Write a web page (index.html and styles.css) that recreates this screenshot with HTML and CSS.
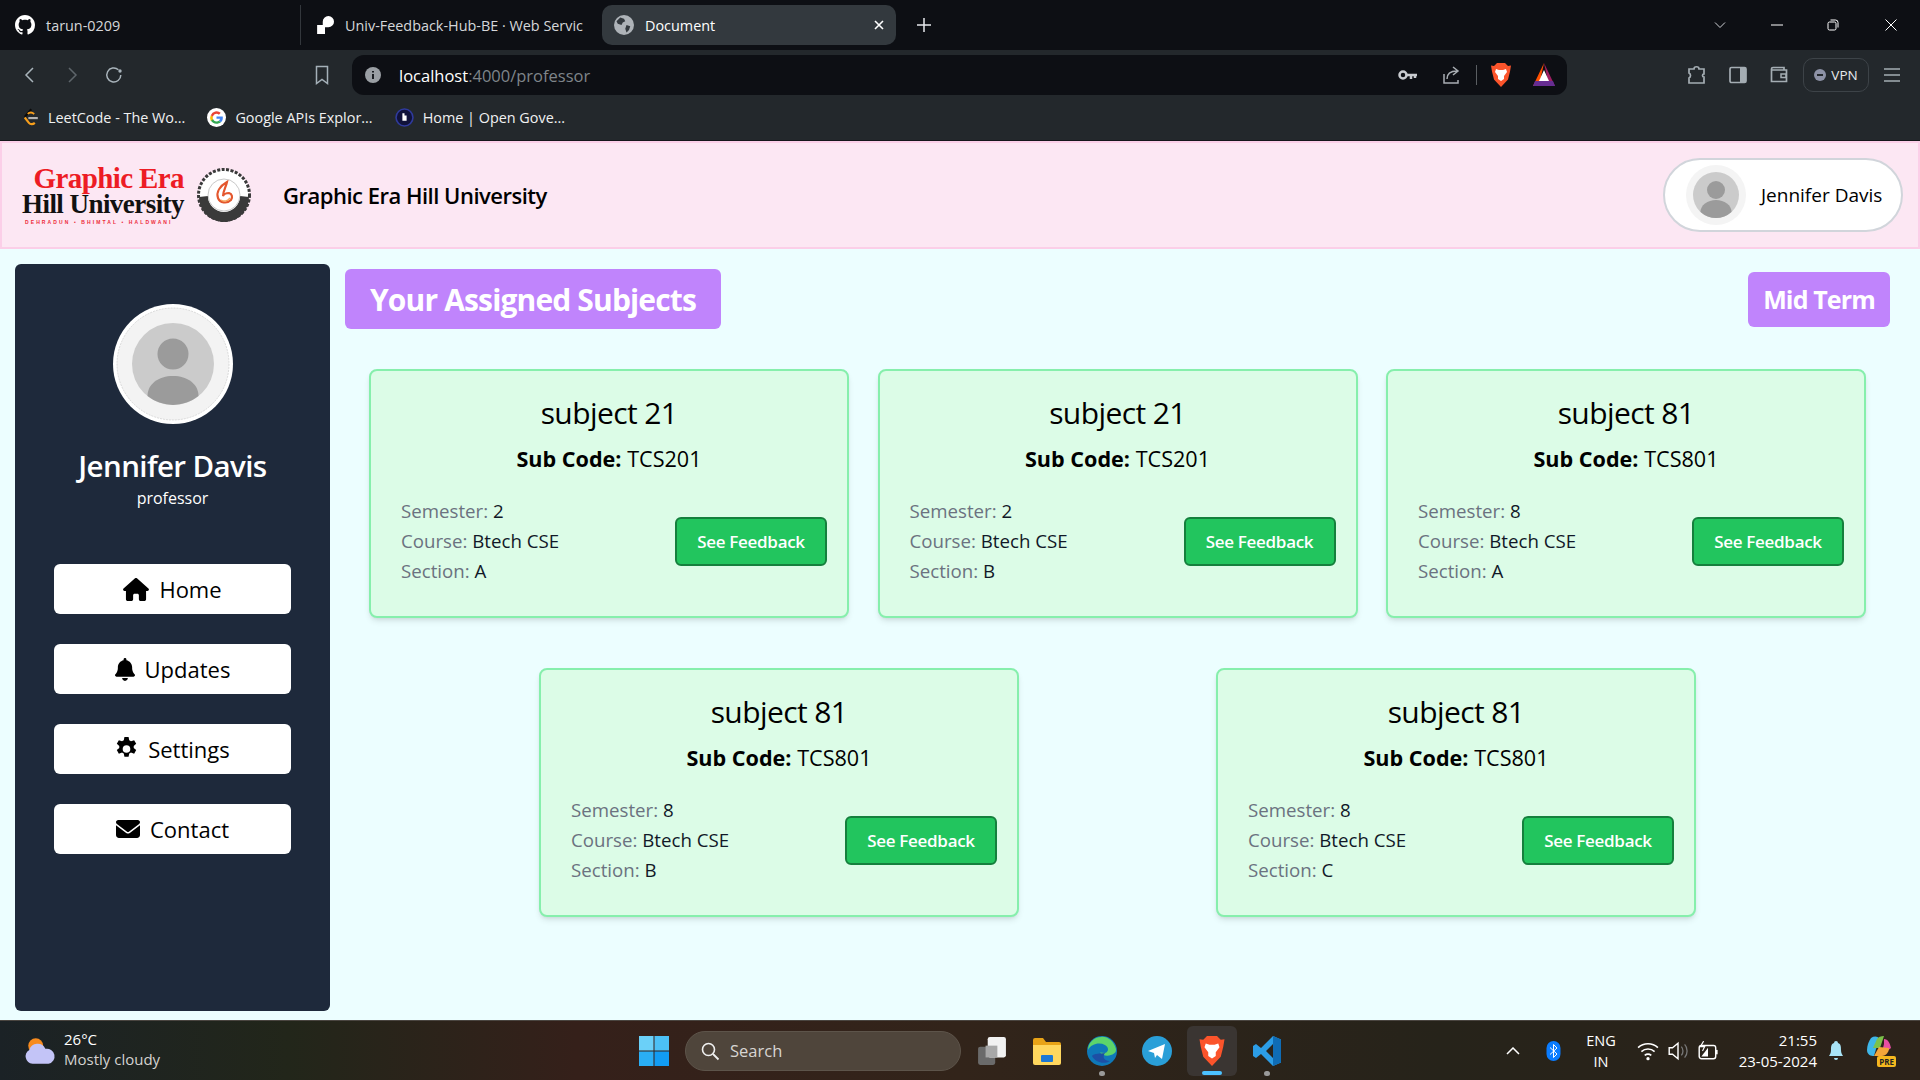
FILE: index.html
```html
<!DOCTYPE html>
<html lang="en">
<head>
<meta charset="UTF-8">
<meta name="viewport" content="width=device-width, initial-scale=1.0">
<title>Document</title>
<link rel="stylesheet" href="styles.css">
</head>
<body>

<!-- browser tabs -->
<div class="tabstrip">
  <div class="tab tab-first">
    <svg class="tab-icon" viewBox="0 0 16 16"><path fill="#fff" d="M8 0C3.58 0 0 3.58 0 8c0 3.54 2.29 6.53 5.47 7.59.4.07.55-.17.55-.38 0-.19-.01-.82-.01-1.49-2.01.37-2.53-.49-2.69-.94-.09-.23-.48-.94-.82-1.13-.28-.15-.68-.52-.01-.53.63-.01 1.08.58 1.23.82.72 1.21 1.87.87 2.33.66.07-.52.28-.87.51-1.07-1.78-.2-3.64-.89-3.64-3.95 0-.87.31-1.59.82-2.15-.08-.2-.36-1.02.08-2.12 0 0 .67-.21 2.2.82.64-.18 1.32-.27 2-.27s1.36.09 2 .27c1.53-1.04 2.2-.82 2.2-.82.44 1.1.16 1.92.08 2.12.51.56.82 1.27.82 2.15 0 3.07-1.87 3.75-3.65 3.95.29.25.54.73.54 1.48 0 1.07-.01 1.93-.01 2.2 0 .21.15.46.55.38A8.01 8.01 0 0 0 16 8c0-4.42-3.58-8-8-8z"/></svg>
    <span>tarun-0209</span>
  </div>
  <div class="tab tab-second">
    <svg class="tab-icon" viewBox="0 0 16 16"><path fill="#fff" d="M1 16V8h5V5a5 5 0 1 1 5 5H8v6z"/></svg>
    <span class="tab-clip">Univ-Feedback-Hub-BE · Web Servic</span>
  </div>
  <div class="tab tab-active">
    <svg class="tab-icon" viewBox="0 0 16 16"><circle cx="8" cy="8" r="8" fill="#aeb3b8"/><path fill="#33393e" d="M5 2l3 1 1 2-2 1-1 2-3-1-1-2zM10 8l3 1-1 3-2 2-1-3z"/></svg>
    <span class="tab-title">Document</span>
    <svg class="tab-close" viewBox="0 0 10 10"><path d="M1 1l8 8M9 1l-8 8" stroke="#fff" stroke-width="1.6"/></svg>
  </div>
  <svg class="new-tab" viewBox="0 0 16 16"><path d="M8 1v14M1 8h14" stroke="#e8eaed" stroke-width="1.5"/></svg>
  <div class="window-controls">
    <svg viewBox="0 0 12 12" class="win-ctl win-down"><path d="M1 3.500l5 5 5-5" fill="none" stroke="#cfd2d6"/></svg>
    <svg viewBox="0 0 12 12" class="win-ctl win-min"><path d="M0 6h12" stroke="#fff"/></svg>
    <svg viewBox="0 0 12 12" class="win-ctl win-max"><rect x="1" y="3" width="8" height="8" rx="1.500" fill="none" stroke="#fff"/><path d="M3.500 1h5a2.500 2.500 0 0 1 2.500 2.500v5" fill="none" stroke="#fff"/></svg>
    <svg viewBox="0 0 12 12" class="win-ctl win-close"><path d="M.5.500l11 11M11.500.500l-11 11" stroke="#fff"/></svg>
  </div>
</div>

<!-- address bar -->
<div class="toolbar">
  <div class="nav-icons">
    <svg class="tool-icon" viewBox="0 0 20 20"><path d="M13 3l-7 7 7 7" fill="none" stroke="#a9b4bb" stroke-width="1.500"/></svg>
    <svg class="tool-icon" viewBox="0 0 20 20"><path d="M7 3l7 7-7 7" fill="none" stroke="#5e656b" stroke-width="1.500"/></svg>
    <svg class="tool-icon" viewBox="0 0 20 20"><path d="M16.800 10a7 7 0 1 1-2.400-5.300" fill="none" stroke="#a9b4bb" stroke-width="1.500"/><circle cx="16" cy="6" r="1.700" fill="#a9b4bb"/></svg>
  </div>
  <svg class="bookmark-icon" viewBox="0 0 16 20"><path d="M2.500 1.500h11v17l-5.500-4-5.500 4z" fill="none" stroke="#a4b0b8" stroke-width="1.500"/></svg>
  <div class="urlbar">
    <svg class="info-icon" viewBox="0 0 16 16"><circle cx="8" cy="8" r="8" fill="#9a9fa4"/><path d="M8 7v5M8 4v1.500" stroke="#0d1014" stroke-width="1.800"/></svg>
    <span class="url-host">localhost</span><span class="url-rest">:4000/professor</span>
    <div class="url-right">
      <svg class="key-icon" viewBox="0 0 20 12"><circle cx="5" cy="6" r="3.500" fill="none" stroke="#c9ccd0" stroke-width="2.500"/><path d="M8 6h11M13 6v4M17 6v3" stroke="#c9ccd0" stroke-width="2.500"/></svg>
      <svg class="share-icon" viewBox="0 0 20 20"><path d="M2 9v9h14v-3M5 14c0-6 4-8 10-8M11 2l5 4-5 4" fill="none" stroke="#a8adb2" stroke-width="1.500"/></svg>
      <div class="url-sep"></div>
      <svg class="brave-icon" viewBox="0 0 20 24"><path fill="#fb542b" d="M3 3l3-3h8l3 3 3-.500-1 6-2 8-7 7.500-7-7.500-2-8-1-6z"/><path fill="#fff" d="M5 6l3 1h4l3-1 1 3-3 4v3l-3 2-3-2v-3l-3-4z"/></svg>
      <svg class="bat-icon" viewBox="0 0 22 24"><path fill="#ff5000" d="M11 0L0 23h6z"/><path fill="#9e1f63" d="M11 0l11 23h-6z"/><path fill="#662d91" d="M2 18h18l2 5H0z"/><path fill="#fff" d="M11 7l5 11H6z"/></svg>
    </div>
  </div>
  <div class="tool-right">
    <svg class="ext-icon" viewBox="0 0 20 20"><path d="M2 4h5c0-3 5-3 5 0h5v5c-2 0-2 3 0 3v6H2v-5c2-1 2-4 0-5z" fill="none" stroke="#a4adb3" stroke-width="1.700"/></svg>
    <svg class="ext-icon" viewBox="0 0 20 20"><rect x="2" y="2.500" width="16" height="15" rx="1.500" fill="none" stroke="#a4adb3" stroke-width="1.700"/><rect x="12" y="3" width="6" height="14" fill="#a4adb3"/></svg>
    <svg class="ext-icon" viewBox="0 0 20 20"><path d="M15 5V2.500H4a1.500 1.500 0 0 0-1.500 1.500v12.500H17.500V5H3" fill="none" stroke="#a4adb3" stroke-width="1.700"/><rect x="12" y="9" width="5" height="3.500" fill="none" stroke="#a4adb3" stroke-width="1.500"/></svg>
    <div class="vpn-pill">
      <span class="vpn-dot"></span>
      <span>VPN</span>
    </div>
    <svg class="ext-icon" viewBox="0 0 20 20"><path d="M2 4h16M2 10h16M2 16h16" stroke="#a4adb3" stroke-width="1.700"/></svg>
  </div>
</div>

<!-- bookmarks -->
<div class="bookmarks">
  <div class="bookmark">
    <svg class="bm-icon" viewBox="0 0 16 16"><path d="M9.500 1L4 7.500" fill="none" stroke="#0a0a0a" stroke-width="1.800"/><path d="M4 8l3.500 4.500c1.200 1.500 3.300 1.500 5 0" fill="none" stroke="#f89f1b" stroke-width="1.800"/><path d="M6.500 5c1.500-1.500 3.500-1.500 5.500 0" fill="none" stroke="#f89f1b" stroke-width="1.500"/><path d="M7 8.500h8" stroke="#b3b3b3" stroke-width="1.800"/></svg>
    <span>LeetCode - The Wo...</span>
  </div>
  <div class="bookmark">
    <svg class="bm-icon" viewBox="0 0 18 18"><circle cx="9" cy="9" r="9" fill="#fff"/><path fill="#4285f4" d="M15 9.200c0-.4 0-.8-.1-1.200H9v2.300h3.400c-.1.700-.6 1.400-1.200 1.800l1.900 1.500c1.200-1 1.900-2.600 1.900-4.400z"/><path fill="#34a853" d="M9 15c1.600 0 3-.5 4.100-1.400l-1.900-1.500c-.6.400-1.300.6-2.200.6-1.600 0-2.900-1-3.400-2.500l-2 1.500C4.600 13.700 6.700 15 9 15z"/><path fill="#fbbc05" d="M5.600 10.700a3.700 3.700 0 0 1 0-2.400l-2-1.500a6 6 0 0 0 0 5.400z"/><path fill="#ea4335" d="M9 5.400c.9 0 1.700.3 2.300.9l1.700-1.700A6 6 0 0 0 3.600 6.800l2 1.500C6.100 6.400 7.400 5.400 9 5.400z"/></svg>
    <span>Google APIs Explor...</span>
  </div>
  <div class="bookmark">
    <svg class="bm-icon" viewBox="0 0 18 18"><circle cx="9" cy="9" r="8" fill="#10123a" stroke="#2f3a9c" stroke-width="1.500"/><path fill="#fff" d="M7 5h2v2h2v5H7z"/></svg>
    <span>Home | Open Gove...</span>
  </div>
</div>

<!-- app -->
<header class="site-header">
  <div class="logo">
    <div class="logo-text">
      <div class="logo-line1">Graphic Era</div>
      <div class="logo-line2">Hill University</div>
      <div class="logo-line3">DEHRADUN • BHIMTAL • HALDWANI</div>
    </div>
    <svg class="logo-seal" viewBox="0 0 56 56">
      <circle cx="28" cy="28" r="25.500" fill="#fff" stroke="#3a3a3a" stroke-width="3" stroke-dasharray="3 1.500"/>
      <path d="M3 30a25 25 0 0 0 50 0l-9-1a16 16 0 0 1-32 0z" fill="#3a3a3a"/>
      <circle cx="28" cy="28" r="16" fill="#fff" stroke="#c9c9c9"/>
      <path d="M31 15c-7 4-11 10-9 16 2 5 9 6 13 2 2-3 1-6-2-7-3 0-5 1-6 3 0-5 3-9 4-14z" fill="none" stroke="#e4572e" stroke-width="2.200"/>
      <path d="M25 33c3 2 7 1 9-2" fill="none" stroke="#f7a35c" stroke-width="1.500"/>
    </svg>
  </div>
  <div class="site-name">Graphic Era Hill University</div>
  <div class="user-pill">
    <div class="pill-avatar">
      <svg viewBox="0 0 60 60"><circle cx="30" cy="30" r="30" fill="#f4f4f4"/><circle cx="30" cy="30" r="23" fill="#cbcbcb"/><circle cx="30" cy="25" r="9" fill="#9b9b9b"/><path d="M14.500 47a15.500 12 0 0 1 31 0 23 23 0 0 1-31 0z" fill="#9b9b9b"/></svg>
    </div>
    <span>Jennifer Davis</span>
  </div>
</header>

<div class="page">
  <aside class="sidebar">
    <div class="profile-photo">
      <svg viewBox="0 0 120 120"><circle cx="60" cy="60" r="60" fill="#fff"/><circle cx="60" cy="60" r="56" fill="#f3f3f3" stroke="#c4c4c4" stroke-width=".6" stroke-dasharray="2 1"/><circle cx="60" cy="60" r="41" fill="#cbcbcb"/><circle cx="60" cy="50" r="15.500" fill="#9b9b9b"/><path d="M34.500 92c0-12 11-20 25.500-20s25.500 8 25.500 20a41 41 0 0 1-51 0z" fill="#9b9b9b"/></svg>
    </div>
    <div class="profile-name">Jennifer Davis</div>
    <div class="profile-role">professor</div>
    <nav class="side-nav">
      <a class="nav-btn">
        <svg class="nav-home" viewBox="0 0 576 512"><path d="M575.800 255.500c0 18-15 32.100-32 32.100h-32l.7 160.200c0 2.700-.2 5.400-.5 8.100V472c0 22.100-17.900 40-40 40H456c-1.100 0-2.200 0-3.300-.1-1.400.1-2.800.1-4.200.1H392c-22.100 0-40-17.900-40-40v-88c0-17.700-14.300-32-32-32h-64c-17.700 0-32 14.300-32 32v88c0 22.100-17.900 40-40 40h-55.900c-1.500 0-3-.1-4.500-.2-1.200.1-2.400.2-3.600.2H104c-22.100 0-40-17.900-40-40V360c0-.9 0-1.900.1-2.800v-69.700h-32c-18 0-32-14-32-32.100 0-9 3-17 10-24L266.400 8c7-7 15-8 22-8s15 2 21 7l255.400 224.500c8 7 12 15 11 24z"/></svg>
        <span>Home</span>
      </a>
      <a class="nav-btn">
        <svg class="nav-bell" viewBox="0 0 448 512"><path d="M224 0c-17.700 0-32 14.300-32 32v19.200C119 66 64 130.600 64 208v18.800c0 47-17.300 92.400-48.500 127.600l-7.400 8.300c-8.400 9.400-10.400 22.900-5.300 34.400S19.400 416 32 416h384c12.600 0 24-7.400 29.200-18.900s3.100-25-5.300-34.400l-7.400-8.300C401.300 319.200 384 273.900 384 226.800V208c0-77.400-55-142-128-156.800V32c0-17.700-14.300-32-32-32zm45.300 493.300c12-12 18.700-28.300 18.700-45.300H160c0 17 6.700 33.300 18.700 45.300s28.300 18.700 45.300 18.700 33.300-6.700 45.300-18.700z"/></svg>
        <span>Updates</span>
      </a>
      <a class="nav-btn">
        <svg class="nav-gear" viewBox="1.500 1 21 22"><path fill-rule="evenodd" d="M13.900 1l.6 3c.6.200 1.100.5 1.600.9l2.900-1 1.900 3.300-2.300 2a7 7 0 0 1 0 1.800l2.300 2-1.900 3.300-2.900-1c-.5.400-1 .7-1.600.9l-.6 3h-3.800l-.6-3a7 7 0 0 1-1.600-.9l-2.900 1-1.900-3.300 2.300-2a7 7 0 0 1 0-1.800l-2.300-2 1.900-3.300 2.900 1c.5-.4 1-.7 1.600-.9l.6-3zM12 8.500a3.500 3.500 0 1 0 0 7 3.500 3.500 0 0 0 0-7z"/></svg>
        <span>Settings</span>
      </a>
      <a class="nav-btn">
        <svg class="nav-mail" viewBox="0 0 512 512"><path d="M48 64C21.500 64 0 85.500 0 112c0 15.100 7.100 29.300 19.200 38.400l217.600 163.200c11.400 8.500 27 8.500 38.400 0l217.600-163.200c12.100-9.100 19.200-23.300 19.200-38.400 0-26.500-21.500-48-48-48H48zM0 176v208c0 35.300 28.700 64 64 64h384c35.300 0 64-28.700 64-64V176L294.400 339.200a63.900 63.900 0 0 1-76.800 0L0 176z"/></svg>
        <span>Contact</span>
      </a>
    </nav>
  </aside>

  <main class="content">
    <div class="content-head">
      <h1 class="page-title">Your Assigned Subjects</h1>
      <div class="term-badge">Mid Term</div>
    </div>

    <div class="card-row card-row-top">
      <div class="card">
        <h2>subject 21</h2>
        <p class="sub-code"><b>Sub Code:</b> TCS201</p>
        <div class="card-foot">
          <ul class="card-meta">
            <li>Semester: <span>2</span></li>
            <li>Course: <span>Btech CSE</span></li>
            <li>Section: <span>A</span></li>
          </ul>
          <button class="feedback-btn">See Feedback</button>
        </div>
      </div>
      <div class="card">
        <h2>subject 21</h2>
        <p class="sub-code"><b>Sub Code:</b> TCS201</p>
        <div class="card-foot">
          <ul class="card-meta">
            <li>Semester: <span>2</span></li>
            <li>Course: <span>Btech CSE</span></li>
            <li>Section: <span>B</span></li>
          </ul>
          <button class="feedback-btn">See Feedback</button>
        </div>
      </div>
      <div class="card">
        <h2>subject 81</h2>
        <p class="sub-code"><b>Sub Code:</b> TCS801</p>
        <div class="card-foot">
          <ul class="card-meta">
            <li>Semester: <span>8</span></li>
            <li>Course: <span>Btech CSE</span></li>
            <li>Section: <span>A</span></li>
          </ul>
          <button class="feedback-btn">See Feedback</button>
        </div>
      </div>
    </div>

    <div class="card-row card-row-bottom">
      <div class="card">
        <h2>subject 81</h2>
        <p class="sub-code"><b>Sub Code:</b> TCS801</p>
        <div class="card-foot">
          <ul class="card-meta">
            <li>Semester: <span>8</span></li>
            <li>Course: <span>Btech CSE</span></li>
            <li>Section: <span>B</span></li>
          </ul>
          <button class="feedback-btn">See Feedback</button>
        </div>
      </div>
      <div class="card">
        <h2>subject 81</h2>
        <p class="sub-code"><b>Sub Code:</b> TCS801</p>
        <div class="card-foot">
          <ul class="card-meta">
            <li>Semester: <span>8</span></li>
            <li>Course: <span>Btech CSE</span></li>
            <li>Section: <span>C</span></li>
          </ul>
          <button class="feedback-btn">See Feedback</button>
        </div>
      </div>
    </div>
  </main>
</div>

<!-- windows taskbar -->
<footer class="taskbar">
  <div class="weather">
    <svg class="weather-icon" viewBox="0 0 30 26"><circle cx="11" cy="8" r="7" fill="#f78b1f"/><path fill="#c3c4f7" d="M8 25a7 7 0 0 1-3-13 8 8 0 0 1 15-1 7 7 0 0 1 3 14z"/></svg>
    <div class="weather-text">
      <div>26°C</div>
      <div class="weather-sub">Mostly cloudy</div>
    </div>
  </div>
  <div class="task-center">
    <svg class="win-logo" viewBox="0 0 30 30"><rect width="14.500" height="14.500" fill="#6bd0f8"/><rect x="15.500" width="14.500" height="14.500" fill="#4cc0f5"/><rect y="15.500" width="14.500" height="14.500" fill="#2aaef5"/><rect x="15.500" y="15.500" width="14.500" height="14.500" fill="#129cf3"/></svg>
    <div class="task-search">
      <svg viewBox="0 0 20 20"><circle cx="8.500" cy="8.500" r="6" fill="none" stroke="#f0f0f0" stroke-width="1.600"/><path d="M13 13l5.500 5.500" stroke="#f0f0f0" stroke-width="1.800"/></svg>
      <span>Search</span>
    </div>
    <div class="task-app">
      <svg viewBox="0 0 28 28"><rect x="1" y="10" width="16" height="17" rx="2" fill="#6a6a6a"/><rect x="10" y="1" width="17" height="19" rx="2" fill="#f2f2f2"/><rect x="8" y="9" width="11" height="11" fill="#a8a8a8"/></svg>
    </div>
    <div class="task-app">
      <svg viewBox="0 0 30 28"><path fill="#e8a317" d="M1 3a2 2 0 0 1 2-2h8l3 4h13a2 2 0 0 1 2 2v2H1z"/><path fill="#ffd75e" d="M1 8h28v18a2 2 0 0 1-2 2H3a2 2 0 0 1-2-2z"/><rect x="9" y="18" width="12" height="7" rx="1" fill="#1c78d4"/></svg>
    </div>
    <div class="task-app task-dot">
      <svg viewBox="0 0 30 30"><circle cx="15" cy="15" r="15" fill="#0f78b8"/><path d="M29 13C27 5 20 0 14 1 7 1 1 7 1 14c3-6 11-8 17-5 4 2 4 7 0 8l-5-.5c3 4 10 4 14 1 2-1 2-3 2-5z" fill="#5dd46b"/><path d="M5 20c3 6 12 9 18 5-6 0-8-4-5-8-5 1-11 0-13 3z" fill="#1d4fa5"/></svg>
    </div>
    <div class="task-app">
      <svg viewBox="0 0 30 30"><circle cx="15" cy="15" r="15" fill="#2a9fd8"/><path fill="#fff" d="M6 15l17-7-3 15-5-4-2 3-1-5z"/></svg>
    </div>
    <div class="task-app task-current">
      <svg viewBox="0 0 20 24"><path fill="#fb542b" d="M3 3l3-3h8l3 3 3-.500-1 6-2 8-7 7.500-7-7.500-2-8-1-6z"/><path fill="#fff" d="M5 6l3 1h4l3-1 1 3-3 4v3l-3 2-3-2v-3l-3-4z"/></svg>
      <i class="current-bar"></i>
    </div>
    <div class="task-app task-dot">
      <svg viewBox="0 0 28 30"><path fill="#2c9de6" d="M20 0l8 3.500v23L20 30 8 18l-5 4-3-2v-10l3-2 5 4zM20 8l-7 7 7 7z"/><path fill="#0f6cb5" d="M20 0l8 3.500v23L20 30V22l0-14z"/></svg>
    </div>
  </div>
  <div class="tray">
    <svg class="tray-up" viewBox="0 0 14 8"><path d="M1 7l6-6 6 6" fill="none" stroke="#fff" stroke-width="1.500"/></svg>
    <svg class="tray-bt" viewBox="0 0 14 20"><rect width="14" height="20" rx="7" fill="#0a7cff"/><path d="M3.500 6.500l7 6.500-3.500 3.500V3.500L10.500 7l-7 6.500" fill="none" stroke="#fff"/></svg>
    <div class="tray-lang"><div>ENG</div><div>IN</div></div>
    <svg class="tray-icon" viewBox="0 0 20 18"><path d="M1 6a13 13 0 0 1 18 0M4 9.500a9 9 0 0 1 12 0M7 13a5 5 0 0 1 6 0" fill="none" stroke="#fff" stroke-width="1.500"/><circle cx="10" cy="16" r="1.500" fill="#fff"/></svg>
    <svg class="tray-icon" viewBox="0 0 20 18"><path d="M2 6h3l5-4v14l-5-4H2z" fill="none" stroke="#fff" stroke-width="1.300"/><path d="M13 5c2 2 2 6 0 8M16 3c3 3 3 9 0 12" fill="none" stroke="#777" stroke-width="1.200"/></svg>
    <svg class="tray-icon" viewBox="0 0 20 18"><rect x="2" y="4" width="15" height="12" rx="2" fill="none" stroke="#fff" stroke-width="1.300"/><path fill="#fff" d="M4 14l6-8v8z"/><path d="M18 8v4" stroke="#fff" stroke-width="1.500"/><path d="M6 0L3 5h4L5 9" fill="none" stroke="#fff"/></svg>
    <div class="tray-clock"><div>21:55</div><div>23-05-2024</div></div>
    <svg class="tray-bell" viewBox="0 0 16 20"><path fill="#a9e4f7" d="M8 0a2 2 0 0 1 2 2c3 1 3 4 3 7s1 4 2 6H1c1-2 2-3 2-6s0-6 3-7a2 2 0 0 1 2-2zM6 17h4a2 2 0 0 1-4 0z"/></svg>
    <div class="copilot">
      <svg viewBox="0 0 30 24"><path fill="#3fb6e8" d="M6 2c3-2 7-2 8 1l-5 17c-3 0-7-1-7-6 0-5 2-9 4-12z"/><path fill="#7cc24b" d="M8 12l4-9c1-2 4-3 7-3l-4 12z"/><path fill="#e74ea3" d="M19 3c4 0 6 4 7 9l-10 8 3-12z"/><path fill="#f3a63a" d="M9 20l5-9 10 1c0 4-3 8-7 8z"/></svg>
      <b class="pre-tag">PRE</b>
    </div>
  </div>
</footer>

</body>
</html>
```
FILE: styles.css
```css
* {
  box-sizing: border-box;
}

html, body {
  margin: 0;
  padding: 0;
}

body {
  width: 1920px;
  height: 1080px;
  overflow: hidden;
  display: flex;
  flex-direction: column;
  background: #ecfeff;
  font-family: "Open Sans", "Noto Sans", sans-serif;
  color: #000;
}

svg {
  display: block;
  flex-shrink: 0;
}

/* browser tabs */
.tabstrip {
  height: 50px;
  flex-shrink: 0;
  display: flex;
  align-items: center;
  background: #0d0f14;
  color: #d5d7da;
  font-size: 14.400px;
  padding-left: 5px;
}

.tab {
  display: flex;
  align-items: center;
  height: 40px;
}

.tab-icon {
  width: 20px;
  height: 20px;
}

.tab-first {
  width: 295px;
  padding-left: 10px;
  gap: 11px;
}

.tab-second {
  width: 302px;
  padding-left: 15px;
  gap: 11px;
  border-left: 1px solid #33373c;
}

.tab-second .tab-icon {
  width: 18px;
  height: 18px;
}

.tab-clip {
  white-space: nowrap;
}

.tab-active {
  width: 294px;
  padding: 0 12px 0 12px;
  gap: 11px;
  background: #33393e;
  border-radius: 10px;
  color: #fff;
}

.tab-icon + .tab-title {
  flex: 1;
}

.tab-close {
  width: 10px;
  height: 10px;
}

.new-tab {
  width: 16px;
  height: 16px;
  margin-left: 20px;
}

.window-controls {
  margin-left: auto;
  display: flex;
  align-items: center;
}

.win-ctl {
  width: 12px;
  height: 12px;
}

.win-down {
  margin-right: 45px;
}

.win-min {
  margin-right: 44px;
}

.win-max {
  margin-right: 46px;
}

.win-close {
  margin-right: 23px;
}

/* address bar */
.toolbar {
  height: 50px;
  flex-shrink: 0;
  display: flex;
  align-items: center;
  background: #23282c;
}

.nav-icons {
  display: flex;
  gap: 22px;
  padding-left: 20px;
}

.tool-icon {
  width: 20px;
  height: 20px;
}

.bookmark-icon {
  width: 16px;
  height: 20px;
  margin-left: 190px;
}

.urlbar {
  width: 1215px;
  height: 40px;
  margin-left: 22px;
  display: flex;
  align-items: center;
  padding-left: 13px;
  background: #0d0f14;
  border-radius: 12px;
  font-size: 16.500px;
}

.info-icon {
  width: 16px;
  height: 16px;
  margin-right: 18px;
}

.url-host {
  color: #fff;
}

.url-rest {
  color: #7f858a;
}

.url-right {
  margin-left: auto;
  display: flex;
  align-items: center;
}

.key-icon {
  width: 20px;
  height: 12px;
}

.share-icon {
  width: 20px;
  height: 20px;
  margin-left: 24px;
}

.url-sep {
  width: 1px;
  height: 20px;
  margin-left: 14px;
  background: #5a5e62;
}

.brave-icon {
  width: 20px;
  height: 24px;
  margin-left: 14px;
}

.bat-icon {
  width: 22px;
  height: 24px;
  margin: 0 12px 0 22px;
}

.tool-right {
  display: flex;
  align-items: center;
  margin-left: auto;
  padding-right: 18px;
  gap: 21px;
}

.ext-icon {
  width: 20px;
  height: 20px;
}

.vpn-pill {
  width: 66px;
  height: 34px;
  margin: 0 -8px 0 -7px;
  display: flex;
  align-items: center;
  justify-content: center;
  gap: 5px;
  border: 1px solid #3d4348;
  border-radius: 10px;
  color: #e8eaed;
  font-size: 13.500px;
}

.vpn-dot {
  width: 12px;
  height: 12px;
  border-radius: 50%;
  background: #8d92a6;
  position: relative;
}

.vpn-dot::after {
  content: "";
  position: absolute;
  left: 3px;
  top: 5px;
  width: 6px;
  height: 2px;
  background: #23282c;
}

/* bookmarks */
.bookmarks {
  height: 41px;
  flex-shrink: 0;
  display: flex;
  align-items: center;
  padding: 0 0 6px 20px;
  gap: 22px;
  background: #23282c;
  border-bottom: 1px solid #14171a;
  color: #f0f1f2;
  font-size: 14.400px;
}

.bookmark {
  display: flex;
  align-items: center;
  gap: 9px;
}

.bm-icon {
  width: 19px;
  height: 19px;
}

/* app header */
.site-header {
  height: 108px;
  flex-shrink: 0;
  display: flex;
  align-items: center;
  padding: 0 15px 0 16px;
  background: #fce7f3;
  border: 2px solid #fbcfe8;
}

.logo {
  display: flex;
  align-items: center;
  gap: 12px;
  width: 245px;
}

.logo-text {
  width: 166px;
  font-family: "Liberation Serif", serif;
  font-weight: 700;
  text-align: right;
  line-height: 1;
}

.logo-line1 {
  color: #ed1c24;
  font-size: 29px;
  line-height: 27px;
  letter-spacing: -.6px;
}

.logo-line2 {
  font-size: 27px;
  line-height: 25px;
  letter-spacing: -.55px;
  color: #111;
}

.logo-line3 {
  margin-top: 2px;
  padding-left: 7px;
  color: #ed2b3a;
  font-family: "Liberation Sans", sans-serif;
  font-size: 5px;
  line-height: 7px;
  letter-spacing: 2.100px;
  text-align: left;
  white-space: nowrap;
}

.logo-seal {
  width: 56px;
  height: 56px;
}

.site-name {
  margin-left: 20px;
  font-size: 22px;
  font-weight: 600;
  letter-spacing: -.5px;
}

.user-pill {
  margin-left: auto;
  width: 240px;
  height: 74px;
  display: flex;
  align-items: center;
  padding-left: 21px;
  gap: 15px;
  background: #fff;
  border: 2px solid #d1d5db;
  border-radius: 37px;
  font-size: 19px;
}

.pill-avatar {
  width: 60px;
  height: 60px;
}

/* app body */
.page {
  flex: 1;
  display: flex;
  min-height: 0;
  padding: 15px 30px 9px 15px;
}

.sidebar {
  width: 315px;
  flex-shrink: 0;
  display: flex;
  flex-direction: column;
  align-items: center;
  padding-top: 40px;
  background: #1e293b;
  border-radius: 6px;
  color: #fff;
}

.profile-photo {
  width: 120px;
  height: 120px;
}

.profile-name {
  margin-top: 22px;
  font-size: 29.500px;
  font-weight: 600;
  line-height: 40px;
  letter-spacing: -.6px;
}

.profile-role {
  font-size: 16px;
  line-height: 24px;
}

.side-nav {
  margin-top: 54px;
  display: flex;
  flex-direction: column;
  gap: 30px;
}

.nav-btn {
  width: 237px;
  height: 50px;
  display: flex;
  align-items: center;
  justify-content: center;
  gap: 10px;
  background: #fff;
  border-radius: 6px;
  color: #000;
  font-size: 22px;
}

.nav-btn svg {
  fill: #000;
}

.nav-home {
  width: 26px;
  height: 23px;
}

.nav-bell {
  width: 20px;
  height: 23px;
}

.nav-gear {
  width: 23px;
  height: 24px;
}

.nav-mail {
  width: 24px;
  height: 24px;
}

.content {
  flex: 1;
  min-width: 0;
  display: flex;
  flex-direction: column;
  padding-left: 15px;
}

.content-head {
  display: flex;
  justify-content: space-between;
  align-items: center;
  height: 64px;
  margin-top: 3px;
}

.page-title {
  margin: 0;
  height: 60px;
  padding: 0 25px;
  display: flex;
  align-items: center;
  background: #c084fc;
  border-radius: 6px;
  color: #fff;
  font-size: 30px;
  font-weight: 700;
  letter-spacing: -.85px;
}

.term-badge {
  height: 55px;
  padding: 0 15px;
  display: flex;
  align-items: center;
  background: #c084fc;
  border-radius: 6px;
  color: #fff;
  font-size: 25px;
  font-weight: 700;
  letter-spacing: -.85px;
}

.card-row {
  display: flex;
}

.card-row-top {
  margin-top: 38px;
  padding: 0 24px;
  justify-content: space-between;
}

.card-row-bottom {
  margin-top: 50px;
  justify-content: center;
  gap: 197px;
}

.card {
  width: 480px;
  height: 249px;
  padding: 18px 20px 0 30px;
  background: #dcfce7;
  border: 2px solid #86efac;
  border-radius: 8px;
  box-shadow: 0 4px 6px -1px rgba(0, 0, 0, .1), 0 2px 4px -2px rgba(0, 0, 0, .1);
}

.card h2 {
  margin: 0;
  padding-right: 10px;
  font-size: 30px;
  font-weight: 400;
  line-height: 47px;
  text-align: center;
  letter-spacing: -.6px;
}

.sub-code {
  margin: 0;
  padding-right: 10px;
  font-size: 21.600px;
  line-height: 46px;
  text-align: center;
}

.sub-code b {
  font-weight: 700;
}

.card-foot {
  margin-top: 14px;
  display: flex;
  align-items: center;
  justify-content: space-between;
}

.card-meta {
  margin: 0;
  padding: 0;
  list-style: none;
  color: #6b7280;
  font-size: 18.700px;
  line-height: 30px;
}

.card-meta span {
  color: #111827;
}

.feedback-btn {
  width: 152px;
  height: 49px;
  padding: 0;
  background: #22c55e;
  border: 2px solid #15803d;
  border-radius: 6px;
  color: #fff;
  font-family: inherit;
  font-size: 17px;
  font-weight: 600;
  letter-spacing: -.3px;
}

/* windows taskbar */
.taskbar {
  height: 60px;
  flex-shrink: 0;
  position: relative;
  display: flex;
  align-items: center;
  background: linear-gradient(90deg, #1b2226 0, #22261a 15%, #35201a 30%, #32241a 50%, #26231a 75%, #2d231a 100%);
  border-top: 1px solid #4a4540;
  color: #fff;
}

.weather {
  display: flex;
  align-items: center;
  padding-left: 24px;
  gap: 8px;
  font-size: 15px;
  line-height: 20px;
}

.weather-icon {
  width: 32px;
  height: 28px;
}

.weather-text {
  margin-top: -3px;
}

.weather-sub {
  color: #d4d2d0;
}

.task-center {
  position: absolute;
  left: 639px;
  top: 0;
  height: 59px;
  display: flex;
  align-items: center;
}

.win-logo {
  width: 30px;
  height: 30px;
}

.task-search {
  width: 276px;
  height: 40px;
  margin: 0 6px 0 16px;
  display: flex;
  align-items: center;
  padding-left: 14px;
  gap: 10px;
  background: #4f453b;
  border: 1px solid #5d544a;
  border-radius: 20px;
  color: #d8d5d2;
  font-size: 16.500px;
}

.task-search svg {
  width: 20px;
  height: 20px;
}

.task-app {
  position: relative;
  width: 50px;
  height: 50px;
  margin-right: 5px;
  display: flex;
  align-items: center;
  justify-content: center;
  border-radius: 6px;
}

.task-app svg {
  width: 30px;
  height: 30px;
}

.task-current {
  background: #3a3532;
}

.task-dot::after {
  content: "";
  position: absolute;
  left: 22px;
  bottom: 0;
  width: 6px;
  height: 5px;
  border-radius: 3px;
  background: #9a9a9a;
}

.current-bar {
  position: absolute;
  left: 15px;
  bottom: 1px;
  width: 20px;
  height: 4px;
  border-radius: 2px;
  background: #4cc2ff;
}

.tray {
  margin-left: auto;
  display: flex;
  align-items: center;
  padding-right: 25px;
  font-size: 14.500px;
  line-height: 21px;
}

.tray-up {
  width: 14px;
  height: 8px;
  margin-right: 26px;
}

.tray-bt {
  width: 15px;
  height: 20px;
  margin-right: 24px;
}

.tray-lang {
  width: 32px;
  margin-right: 20px;
  text-align: center;
}

.tray-icon {
  width: 22px;
  height: 20px;
  margin-right: 8px;
}

.tray-clock {
  width: 82px;
  margin-left: 8px;
  text-align: right;
  font-size: 15px;
}

.tray-bell {
  width: 16px;
  height: 20px;
  margin: 0 21px 0 11px;
}

.copilot {
  position: relative;
  width: 30px;
  height: 30px;
}

.copilot svg {
  width: 30px;
  height: 24px;
}

.pre-tag {
  position: absolute;
  right: -1px;
  bottom: -1px;
  padding: 0 2px;
  background: #f5b81f;
  border-radius: 2px;
  color: #222;
  font-size: 8px;
  line-height: 11px;
}
```
